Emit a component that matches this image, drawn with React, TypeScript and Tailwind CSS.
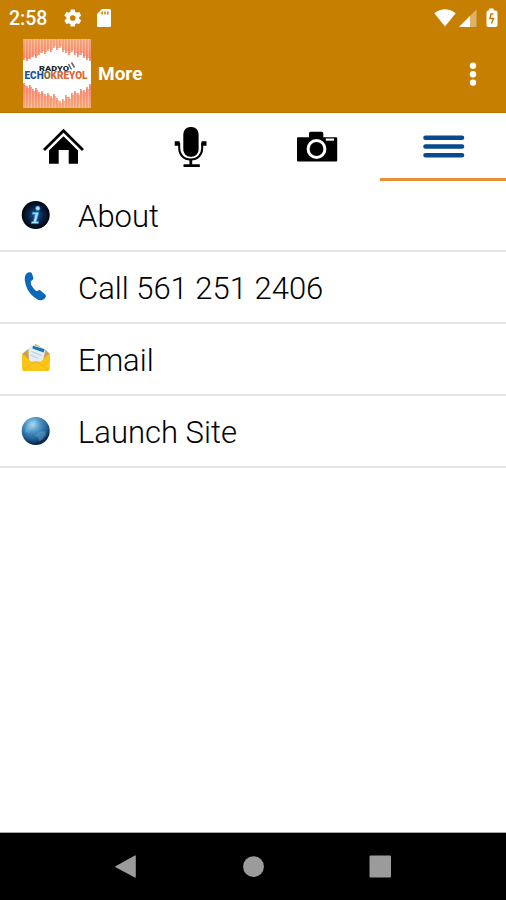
import React from "react";

interface TabProps {
  active?: boolean;
  children: React.ReactNode;
}

interface MenuItem {
  title: string;
  icon: React.ReactNode;
}

// heights of the sound bars around the logo, left to right
const TOP_BARS = [20, 21, 19, 17, 18, 15, 13, 14, 11, 12, 8, 10, 8, 12, 13, 15, 12, 15, 17, 15, 18, 20, 21];
const BOTTOM_BARS = [24, 21, 22, 18, 19, 15, 16, 13, 14, 11, 13, 9, 6, 8, 12, 10, 14, 16, 14, 18, 17, 20, 23];

const Logo: React.FC = () => (
  <svg width="68" height="69" viewBox="0 0 68 69">
    <defs>
      <linearGradient id="bars" x1="0" y1="0" x2="0" y2="69" gradientUnits="userSpaceOnUse">
        <stop offset="0" stopColor="#f5a06c" />
        <stop offset="0.32" stopColor="#fa7060" />
        <stop offset="0.65" stopColor="#fa7060" />
        <stop offset="1" stopColor="#f5a06c" />
      </linearGradient>
    </defs>
    <rect width="68" height="69" fill="#fff" />
    {TOP_BARS.map((h, i) => (
      <g key={i} fill="url(#bars)">
        <rect x={i * 3} y="0" width="3" height={h - 1} opacity="0.65" />
        <rect x={i * 3} y="0" width="1.8" height={h + 1} opacity="0.85" />
        <rect x={i * 3} y={70 - BOTTOM_BARS[i]} width="3" height={BOTTOM_BARS[i]} opacity="0.65" />
        <rect x={i * 3} y={68 - BOTTOM_BARS[i]} width="1.8" height={BOTTOM_BARS[i] + 2} opacity="0.85" />
      </g>
    ))}
    <g fontFamily="Roboto, sans-serif" fontWeight="900">
      <text x="16" y="32" fontSize="6.8" textLength="30" lengthAdjust="spacingAndGlyphs" fill="#20242a">
        RADYO
      </text>
      <text x="1.5" y="40" fontSize="10" textLength="63" lengthAdjust="spacingAndGlyphs">
        <tspan fill="#1c51a5">ECH</tspan>
        <tspan fill="#77733b">O</tspan>
        <tspan fill="#df6732">KREYOL</tspan>
      </text>
    </g>
    <path d="M45.500 25l3 5.500M48.500 23.500l3 5" stroke="#666" strokeWidth="1.500" />
  </svg>
);

const StatusBar: React.FC = () => (
  <div className="flex h-9 items-center pl-[9px] pr-[7px] text-white">
    <span className="w-[54px] pt-px text-[19.5px] leading-9 font-medium">2:58</span>
    <svg width="20" height="20" viewBox="0 0 24 24" fill="currentColor">
      <path
        fillRule="evenodd"
        d="M19.4 13a7.6 7.6 0 0 0 0-2l2.2-1.7c.2-.2.3-.5.1-.7l-2.1-3.600c-.1-.2-.4-.3-.6-.2l-2.600 1a8 8 0 0 0-1.700-1l-.4-2.700c0-.2-.2-.4-.5-.4H9.700c-.3 0-.5.2-.5.4l-.4 2.700a8 8 0 0 0-1.700 1l-2.600-1c-.2-.1-.5 0-.6.2L1.800 8.600c-.2.2-.1.5.1.7L4.100 11a7.600 7.600 0 0 0 0 2l-2.200 1.700c-.2.2-.3.5-.1.7l2.100 3.600c.1.2.4.3.6.2l2.600-1a8 8 0 0 0 1.700 1l.4 2.700c0 .2.2.4.5.4h4.100c.3 0 .5-.2.5-.4l.4-2.700a8 8 0 0 0 1.700-1l2.600 1c.2.100.5 0 .6-.2l2.100-3.600c.2-.2.100-.5-.100-.7zM11.750 15.400a3.400 3.400 0 1 1 0-6.800 3.400 3.400 0 0 1 0 6.800z"
      />
    </svg>
    <svg className="ml-[13px]" width="16" height="20" viewBox="0 0 16 20">
      <path d="M6 1h7.500Q15 1 15 2.500v15q0 1.500-1.500 1.500h-11Q1 19 1 17.500V6z" fill="currentColor" />
      <path d="M6.200 3.500v3M9 3.500v3M11.800 3.500v3" stroke="#c77f02" strokeWidth="1.500" />
    </svg>
    <div className="ml-auto flex items-center">
      <svg width="22" height="18" viewBox="0 0 22 18">
        <path d="M0.300 4.300Q11-3.800 21.700 4.300L11 17.500z" fill="currentColor" />
      </svg>
      <svg className="ml-[3px]" width="18" height="18" viewBox="0 0 18 18" fill="currentColor">
        <path d="M0 18L17.500 0.500V18z" opacity="0.4" />
        <path d="M0 18L11 7v11z" />
      </svg>
      <svg className="ml-2" width="14" height="20" viewBox="0 0 14 20">
        <path d="M4.300 0.500h4.400v2h2q1.800 0 1.800 1.800v13q0 1.800-1.800 1.800h-7.400q-1.800 0-1.800-1.800v-13q0-1.800 1.800-1.800h1z" fill="currentColor" />
        <path d="M8.500 6H6L5 10.500h3.500L6.500 15.500" fill="none" stroke="#c77f02" strokeWidth="1.500" />
      </svg>
    </div>
  </div>
);

const Header: React.FC = () => (
  <header className="h-[113px] shrink-0 border-b border-[#b97500] bg-[#c77f02]">
    <StatusBar />
    <div className="flex h-[75px] items-center pl-[23px] pr-[27px] text-white">
      <Logo />
      <h1 className="ml-[7px] pt-0.5 text-[19px] font-bold">More</h1>
      <button className="ml-auto" aria-label="Options">
        <svg width="12" height="26" viewBox="0 0 12 26" fill="currentColor">
          <circle cx="6" cy="4.800" r="3.200" />
          <circle cx="6" cy="13.200" r="3.200" />
          <circle cx="6" cy="21.600" r="3.200" />
        </svg>
      </button>
    </div>
  </header>
);

const Tab: React.FC<TabProps> = ({ active, children }) => (
  <button className="flex flex-1 flex-col items-center justify-between pt-3">
    <svg width="44" height="44" viewBox="0 0 44 44">
      {children}
    </svg>
    {active && <span className="h-[3px] w-full bg-[#eb8d38]" />}
  </button>
);

const Tabs: React.FC = () => (
  <nav className="flex h-[68px] shrink-0">
    <Tab>
      <path d="M3 25L22.500 5.800 42 25" fill="none" stroke="#000" strokeWidth="2.800" />
      <path d="M22.500 11.200L37 25.500V38.700H27.700V25H17.700V38.700H8V25.500z" />
    </Tab>
    <Tab>
      <rect x="15.300" y="2" width="15.300" height="29.800" rx="7" />
      <path d="M6.700 16.300h5v4.500h-5zM33.500 16.300h5v4.500h-5zM15.500 39.200h16.300v2.800H15.500z" />
      <path d="M11.200 18v5c0 6.800 4.200 11.500 11.500 11.500S34.200 29.800 34.200 23v-5" fill="none" stroke="#000" strokeWidth="2" />
      <path d="M22.800 34v6" stroke="#000" strokeWidth="2.800" />
    </Tab>
    <Tab>
      <path d="M4 12.200H15V8.200q0-1.500 1.500-1.500h11.300q1.500 0 1.500 1.500v4H42.200q1 0 1 1v22.200q0 1-1 1H4q-1 0-1-1V13.200q0-1 1-1z" />
      <path d="M31.800 13.500h8.200v2.200h-8.200z" fill="#fff" />
      <circle cx="22.500" cy="24" r="8.400" fill="#000" stroke="#fff" strokeWidth="3" />
    </Tab>
    <Tab active>
      <path d="M4.500 12.800h36.500M4.500 21.500h36.500M4.500 30.200h36.500" stroke="#09498e" strokeWidth="4.600" strokeLinecap="round" />
    </Tab>
  </nav>
);

const items: MenuItem[] = [
  {
    title: "About",
    icon: (
      <>
        <defs>
          <radialGradient id="info">
            <stop offset="0" stopColor="#1b5aa0" />
            <stop offset="0.55" stopColor="#0a2245" />
            <stop offset="1" stopColor="#03060d" />
          </radialGradient>
        </defs>
        <circle cx="13.700" cy="14" r="14" fill="url(#info)" />
        <g fill="#a5e4fb" stroke="#338fd5" strokeWidth="0.700">
          <circle cx="15.800" cy="7.300" r="2.200" />
          <path d="M10.600 11.200h6.200l-2.400 9.300h2.300l-.5 2H9.200l.5-2h1.700l1.800-7.300h-3z" />
        </g>
      </>
    ),
  },
  {
    title: "Call 561 251 2406",
    icon: (
      <path
        d="M4.500.5Q6.500-1 8.500-.7q1.200.3 1.600 1.700l1.200 3.500q.4 1.500-.8 2.500l-1.700 1.300q-.7 4.500 5.700 10l1.600-.9q1.200-.7 2.300.2l4.800 3.900q1.300 1.200.5 2.400-1.200 2.900-4 3.300-3.500.4-7.500-3Q4 18 2.800 7.500 2.500 2.500 4.500.5z"
        fill="#0c69ba"
      />
    ),
  },
  {
    title: "Email",
    icon: (
      <>
        <path d="M0 9L3 6.500 13.500-1 25 6l2.700 3v9H0z" fill="#c9a15c" />
        <path d="M6.500 4L11-.5 23.500 4.500 21 16l-7 4-7-4z" fill="#e4edf3" />
        <path d="M11 .8l11.500 3.400-.8 3.400-11.200-4z" fill="#1774b8" />
        <path d="M9.500 6.500l10 4M8.500 10l8 3.500" stroke="#adc1d0" strokeWidth="0.800" />
        <path d="M0 8.300L9 16.500h10l8.700-8.200v15.700q0 2-2 2H2q-2 0-2-2z" fill="#fbc516" />
        <path d="M1.500 25.300L12 17.500q2-1.500 4 0l10.500 7.800" fill="#f9c61d" stroke="#e5ab18" strokeWidth="0.700" />
      </>
    ),
  },
  {
    title: "Launch Site",
    icon: (
      <>
        <defs>
          <radialGradient id="globe" cx="0.4" cy="0.27" r="0.72">
            <stop offset="0" stopColor="#a1d7ef" />
            <stop offset="0.4" stopColor="#4790c1" />
            <stop offset="0.75" stopColor="#205b90" />
            <stop offset="1" stopColor="#071e40" />
          </radialGradient>
        </defs>
        <circle cx="13.700" cy="14" r="14" fill="url(#globe)" />
        <path d="M4 10q3-6 10-7 1 3-2 4l1 3-4 2-2 4-4-1z" fill="#a6dcef" opacity="0.25" />
        <path d="M17 15l6-1 1 4-4 5-3 1-1-4-3-1z" fill="#75bddd" opacity="0.350" />
      </>
    ),
  },
];

const NavigationBar: React.FC = () => (
  <footer className="flex h-[68px] shrink-0 items-center justify-between border-t border-[#aaa] bg-black pl-[114px] pr-[114px]">
    <svg width="24" height="24" viewBox="0 0 24 24" fill="#9b9b9b">
      <path d="M1.500 11.300L20.800.5q1-.5 1 .7v20.500q0 1.300-1 .7L1.500 12.300q-.8-.5 0-1z" />
    </svg>
    <svg width="24" height="24" viewBox="0 0 24 24" fill="#9b9b9b">
      <circle cx="12.500" cy="11.700" r="10.400" />
    </svg>
    <svg width="24" height="24" viewBox="0 0 24 24" fill="#9b9b9b">
      <rect x="1.500" y="0.500" width="21.500" height="22" rx="1.200" />
    </svg>
  </footer>
);

export default function App() {
  return (
    <div className="flex h-screen w-full flex-col overflow-hidden bg-white font-['Roboto',sans-serif]">
      <Header />
      <Tabs />
      <ul className="-mt-px">
        {items.map((item) => (
          <li key={item.title} className="flex h-[72px] items-center border-b-2 border-[#e6e6e6] pl-[22px]">
            <svg className="shrink-0 overflow-visible" width="28" height="28" viewBox="0 0 28 28">
              {item.icon}
            </svg>
            <span className="ml-7 pt-[3px] text-[31px] leading-none font-[350] text-black">{item.title}</span>
          </li>
        ))}
      </ul>
      <div className="flex-1" />
      <NavigationBar />
    </div>
  );
}
